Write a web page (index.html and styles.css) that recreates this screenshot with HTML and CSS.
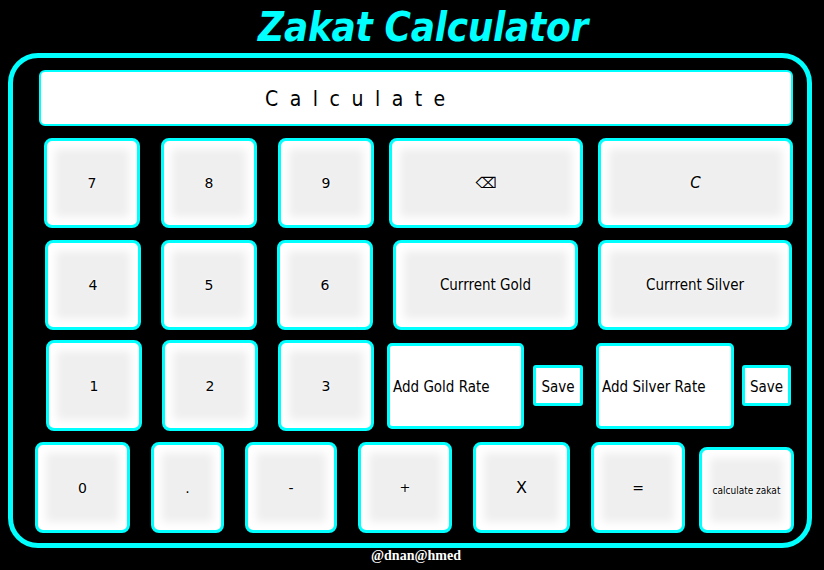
FILE: index.html
```html
<!DOCTYPE html>
<html>
<head>
<meta charset="utf-8">
<title>Zakat Calculator</title>
<link rel="stylesheet" href="styles.css">
</head>
<body>
<h1 class="title">Zakat Calculator</h1>
<div class="calculator">
  <div class="display">Calculate</div>

  <div class="row row-1">
    <div class="digits">
      <button class="key">7</button>
      <button class="key">8</button>
      <button class="key">9</button>
    </div>
    <button class="key key-op key-back">⌫</button>
    <button class="key key-op key-clear">C</button>
  </div>

  <div class="row row-2">
    <div class="digits">
      <button class="key">4</button>
      <button class="key">5</button>
      <button class="key">6</button>
    </div>
    <button class="key key-text key-gold">Currrent Gold</button>
    <button class="key key-text key-silver">Currrent Silver</button>
  </div>

  <div class="row row-3">
    <div class="digits">
      <button class="key">1</button>
      <button class="key">2</button>
      <button class="key">3</button>
    </div>
    <div class="rate-group">
      <div class="rate-input">Add Gold Rate</div>
      <button class="save">Save</button>
    </div>
    <div class="rate-group rate-group-silver">
      <div class="rate-input">Add Silver Rate</div>
      <button class="save">Save</button>
    </div>
  </div>

  <div class="row row-4">
    <button class="key key-zero">0</button>
    <button class="key key-dot">.</button>
    <button class="key key-minus">-</button>
    <button class="key key-plus">+</button>
    <button class="key key-times">X</button>
    <button class="key key-equals">=</button>
    <button class="key key-zakat">calculate zakat</button>
  </div>
</div>
<footer class="credit">@dnan@hmed</footer>
</body>
</html>
```

FILE: styles.css
```css
* {
  box-sizing: border-box;
}

body {
  margin: 0;
  background: #000;
  font-family: "Comic Sans MS", "DejaVu Sans", sans-serif;
}

.title {
  margin: 0;
  height: 53px;
  line-height: 54px;
  text-align: center;
  padding-left: 22px;
  color: #00ffff;
  font-family: "DejaVu Sans Condensed", "DejaVu Sans", sans-serif;
  font-size: 40px;
  font-weight: bold;
  font-style: italic;
  letter-spacing: -0.3px;
}

.calculator {
  margin: 0 12px 0 8px;
  height: 495px;
  border: 5px solid #00ffff;
  border-radius: 30px;
  display: flex;
  flex-direction: column;
}

.display {
  margin: 12px 0 0 26px;
  width: 754px;
  height: 56px;
  background: #fff;
  border: 2px solid #00ffff;
  border-radius: 6px;
  padding-left: 224px;
  line-height: 54px;
  font-size: 21px;
  letter-spacing: 11.5px;
  color: #000;
  font-family: "DejaVu Sans Condensed", "DejaVu Sans", sans-serif;
}

.row {
  display: flex;
  align-items: flex-start;
}

.digits {
  display: flex;
}

.key {
  width: 96px;
  height: 90px;
  margin: 0;
  padding: 0;
  background: #efefef;
  border: 3px solid #00ffff;
  border-radius: 8px;
  box-shadow: inset 0 0 8px 8px #fff;
  color: #000;
  font-family: "DejaVu Sans", sans-serif;
  font-size: 14px;
  text-shadow: 0 0 4px #fff, 0 0 2px #fff;
}

/* row 1 */
.row-1 {
  margin-top: 12px;
  padding-left: 31px;
  gap: 15px;
}
.row-1 .digits {
  gap: 21px;
}
.key-back {
  width: 194px;
  font-size: 15px;
}
.key-clear {
  width: 195px;
  font-style: italic;
  font-size: 15px;
}

/* row 2 */
.row-2 {
  margin-top: 12px;
  padding-left: 32px;
  gap: 20px;
}
.row-2 .digits {
  gap: 20px;
}
.key-text {
  font-family: "DejaVu Sans Condensed", "DejaVu Sans", sans-serif;
  font-size: 15px;
}
.key-gold {
  width: 185px;
}
.key-silver {
  width: 194px;
}

/* row 3 */
.row-3 {
  margin-top: 10px;
  padding-left: 33px;
  gap: 13px;
  align-items: center;
}
.row-3 .digits {
  gap: 20px;
}
.row-3 .key {
  height: 91px;
}

.rate-group {
  display: flex;
  align-items: center;
  gap: 9px;
}
.rate-group-silver {
  gap: 8px;
}

.rate-input {
  width: 137px;
  height: 86px;
  background: #fff;
  border: 3px solid #00ffff;
  border-radius: 5px;
  padding: 2px 0 0 3px;
  display: flex;
  align-items: center;
  color: #000;
  font-family: "DejaVu Sans Condensed", "DejaVu Sans", sans-serif;
  font-size: 15px;
}
.rate-group-silver .rate-input {
  width: 138px;
}

.save {
  width: 50px;
  height: 41px;
  margin: 0;
  padding: 2px 0 0;
  background: #fff;
  border: 3px solid #00ffff;
  border-radius: 3px;
  color: #000;
  font-family: "DejaVu Sans Condensed", "DejaVu Sans", sans-serif;
  font-size: 15px;
}
.rate-group-silver .save {
  width: 49px;
}

/* row 4 */
.row-4 {
  margin-top: 11px;
  padding-left: 22px;
  gap: 21px;
  align-items: flex-end;
}
.row-4 .key {
  height: 91px;
}
.key-zero { width: 95px; }
.key-dot { width: 73px; }
.key-minus { width: 92px; }
.key-plus { width: 94px; font-size: 13px; }
.key-times { width: 97px; font-size: 16px; }
.key-equals { width: 94px; }
.row-4 .key-zakat {
  width: 95px;
  height: 86px;
  margin-left: -7px;
  font-family: "DejaVu Sans Condensed", "DejaVu Sans", sans-serif;
  font-size: 10px;
}

.credit {
  padding-left: 8px;
  text-align: center;
  color: #fff;
  font-family: "Liberation Serif", serif;
  font-weight: bold;
  font-size: 14px;
  line-height: 16px;
}
```
